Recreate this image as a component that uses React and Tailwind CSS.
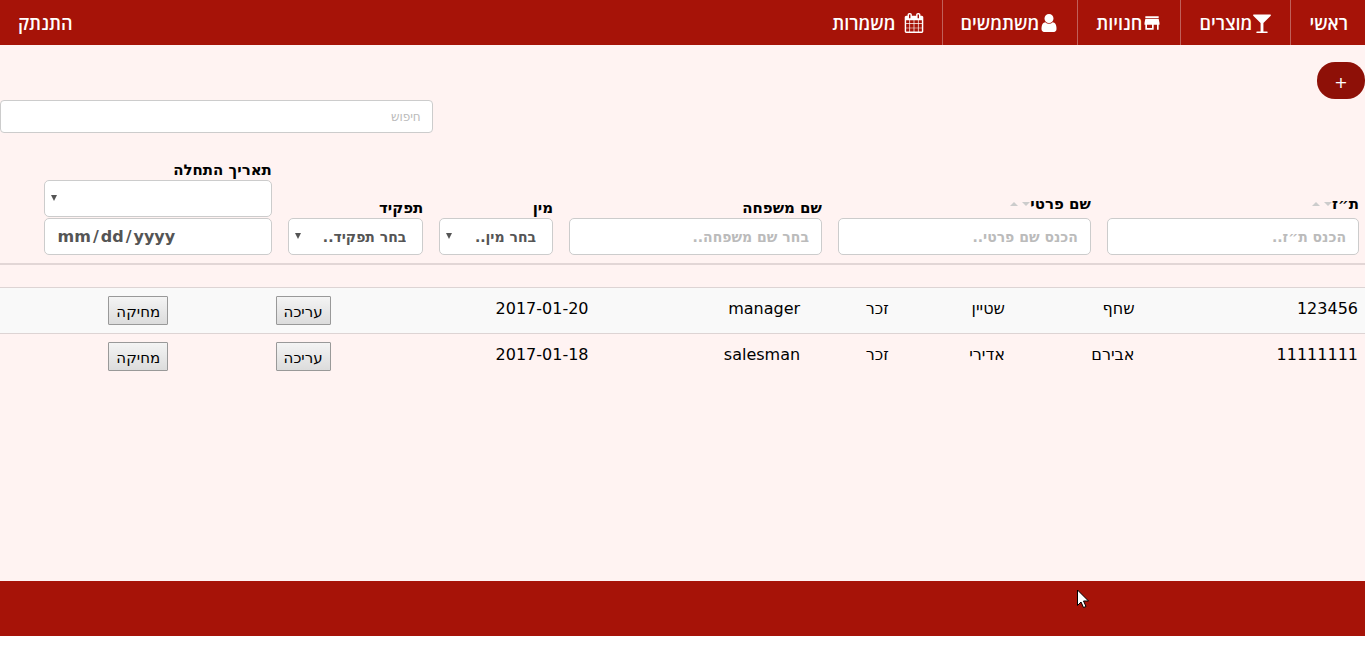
import { MdStore } from 'react-icons/md'

const users = [
  { id: '123456', first: 'שחף', last: 'שטיין', gender: 'זכר', role: 'manager', start: '2017-01-20' },
  { id: '11111111', first: 'אבירם', last: 'אדירי', gender: 'זכר', role: 'salesman', start: '2017-01-18' },
]

export default function App() {
  return (
    <div dir="rtl" className="flex min-h-screen flex-col bg-white font-['DejaVu_Sans',sans-serif] text-base text-black">
      <Navbar />

      <main className="flex flex-1 flex-col bg-[#fff3f2] pt-[17px]">
        <button type="button" aria-label="הוספת משתמש" className="h-[37px] w-12 self-start rounded-[18px] bg-[#8e1007] pt-1 text-white">
          +
        </button>
        <input
          type="search"
          aria-label="חיפוש"
          placeholder="חיפוש"
          className="mt-px h-[33px] w-[31.7%] self-end rounded border border-[#ccc] bg-white px-[11px] text-xs placeholder:text-[#bbb]"
        />
        <Filters />
        <UsersTable />
      </main>

      <footer className="relative mb-3 h-[55px] bg-[#a61308]">
        <Pointer />
      </footer>
    </div>
  )
}

/* ── Top navigation ── */

function Navbar() {
  const item = 'flex h-full items-center px-[18px]'
  return (
    <nav className="flex h-[45px] items-center bg-[#a61308] font-['Open_Sans','DejaVu_Sans',sans-serif] text-lg font-semibold text-white">
      <a href="#home" className="flex h-full items-center pr-[17px] pl-[18px]">ראשי</a>
      <a href="#products" className={`${item} border-r border-[#c0605a]`}>
        <GlassIcon />
        מוצרים
      </a>
      <a href="#stores" className={`${item} border-r border-[#c0605a]`}>
        <MdStore className="size-5" />
        חנויות
      </a>
      <a href="#users" className={`${item} border-r border-[#c0605a]`}>
        <UserIcon />
        משתמשים
      </a>
      <a href="#shifts" className={`${item} gap-2 border-r border-[#c0605a]`}>
        <CalendarIcon />
        משמרות
      </a>
      <a href="#logout" className={`${item} ms-auto`}>התנתק</a>
    </nav>
  )
}

/* ── Column filters ── */

const field = 'block h-[37px] w-full rounded-[5px] border border-[#ccc] bg-white text-sm font-bold text-[#555] placeholder:text-[#bbb]'

function Filters() {
  return (
    <table className="mt-[19px] w-full table-fixed border-b-2 border-[#e2d6d6]">
      <colgroup>
        <col className="w-[19.5%]" />
        <col className="w-[19.7%]" />
        <col className="w-[19.7%]" />
        <col className="w-[9.5%]" />
        <col className="w-[11.1%]" />
        <col className="w-[17.9%]" />
        <col />
      </colgroup>
      <thead>
        <tr className="text-right align-bottom text-[15px] leading-5">
          <th className="py-2 pr-1.5 pl-2">
            <SortLabel htmlFor="id">ת״ז</SortLabel>
            <input id="id" placeholder="הכנס ת״ז.." className={`${field} px-3`} />
          </th>
          <th className="p-2">
            <SortLabel htmlFor="first">שם פרטי</SortLabel>
            <input id="first" placeholder="הכנס שם פרטי.." className={`${field} px-3`} />
          </th>
          <th className="p-2">
            <label htmlFor="last" className="block">שם משפחה</label>
            <input id="last" placeholder="בחר שם משפחה.." className={`${field} px-3`} />
          </th>
          <th className="p-2">
            <label htmlFor="gender" className="block">מין</label>
            <Select id="gender" options={['בחר מין..', 'זכר', 'נקבה']} />
          </th>
          <th className="p-2">
            <label htmlFor="role" className="block">תפקיד</label>
            <Select id="role" options={['בחר תפקיד..', 'manager', 'salesman']} />
          </th>
          <th className="p-2">
            <label htmlFor="start" className="block">תאריך התחלה</label>
            <Select id="compare" label="השוואת תאריך" options={['', '=', '<', '>']} />
            <input
              id="start"
              type="date"
              dir="ltr"
              className={`${field} mt-px px-3 !text-base [&::-webkit-calendar-picker-indicator]:hidden [&::-webkit-datetime-edit-text]:px-px`}
            />
          </th>
          <td />
        </tr>
      </thead>
    </table>
  )
}

function SortLabel({ htmlFor, children }) {
  return (
    <div className="flex items-center pb-1">
      <label htmlFor={htmlFor}>{children}</label>
      <svg className="h-1 w-5" viewBox="0 0 20 4" fill="#ccc">
        <path d="M12 0h8l-4 4zM0 4h8l-4-4z" />
      </svg>
    </div>
  )
}

function Select({ id, label, options }) {
  return (
    <div className="relative">
      <select id={id} aria-label={label} className={`${field} appearance-none pr-4 pl-5`}>
        {options.map((o) => (
          <option key={o}>{o}</option>
        ))}
      </select>
      <svg className="pointer-events-none absolute top-[15px] left-[7px] size-1.5" viewBox="0 0 6 6" fill="#555">
        <path d="M0 0h6l-3 6z" />
      </svg>
    </div>
  )
}

/* ── Users ── */

function UsersTable() {
  return (
    <table className="mt-[22px] w-full table-fixed">
      <colgroup>
        <col className="w-[16.3%]" />
        <col className="w-[9.5%]" />
        <col className="w-[8.5%]" />
        <col className="w-[6.5%]" />
        <col className="w-[15.5%]" />
        <col className="w-[18.9%]" />
        <col className="w-[11.9%]" />
        <col />
      </colgroup>
      <tbody className="leading-[26px]">
        {users.map((u) => (
          <tr key={u.id} className="border-t border-[#ddd4d4] align-top odd:bg-[#f9f9f9]">
            <td className="px-[7px] py-2">{u.id}</td>
            <td className="p-2">{u.first}</td>
            <td className="p-2">{u.last}</td>
            <td className="p-2">{u.gender}</td>
            <td className="p-2">{u.role}</td>
            <td className="p-2">{u.start}</td>
            <td className="p-2"><RowButton>עריכה</RowButton></td>
            <td className="p-2"><RowButton>מחיקה</RowButton></td>
          </tr>
        ))}
      </tbody>
    </table>
  )
}

function RowButton({ children }) {
  return (
    <button type="button" className="block h-[29px] rounded-[1px] border border-[#999] bg-linear-to-b from-[#f4f4f4] to-[#dcdcdc] px-[7px] pt-0.5 text-[15px]">
      {children}
    </button>
  )
}

/* ── Icons ── */

function GlassIcon() {
  return (
    <svg className="size-5" viewBox="0 0 1792 1792" fill="currentColor">
      <path d="M1699 186q0 35-43 78l-632 632v768h320q26 0 45 19t19 45-19 45-45 19h-896q-26 0-45-19t-19-45 19-45 45-19h320v-768l-632-632q-43-43-43-78 0-23 18-36.5t38-17.5 43-4h1408q23 0 43 4t38 17.5 18 36.5z" />
    </svg>
  )
}

function UserIcon() {
  return (
    <svg className="h-[18px] w-5" viewBox="0 128 1280 1536" fill="currentColor">
      <path d="M1280 1399q0 109-62.5 187t-150.5 78h-854q-88 0-150.5-78t-62.5-187q0-85 8.500-160.500t31.500-152 58.500-131 94-89 134.500-34.500q131 128 313 128t313-128q76 0 134.500 34.500t94 89 58.500 131 31.500 152 8.500 160.500zm-256-887q0 159-112.500 271.500t-271.500 112.500-271.500-112.500-112.500-271.500 112.500-271.500 271.500-112.500 271.500 112.500 112.500 271.500z" />
    </svg>
  )
}

function CalendarIcon() {
  return (
    <svg className="size-5" viewBox="0 0 1792 1792" fill="currentColor">
      <path d="M192 1664h288v-288h-288v288zm352 0h320v-288h-320v288zm-352-352h288v-320h-288v320zm352 0h320v-320h-320v320zm-352-384h288v-288h-288v288zm736 736h320v-288h-320v288zm-384-736h320v-288h-320v288zm768 736h288v-288h-288v288zm-384-352h320v-320h-320v320zm-352-864v-288q0-13-9.5-22.5t-22.5-9.5h-64q-13 0-22.5 9.5t-9.5 22.5v288q0 13 9.5 22.5t22.5 9.5h64q13 0 22.5-9.5t9.5-22.5zm736 864h288v-320h-288v320zm-384-384h320v-288h-320v288zm384 0h288v-288h-288v288zm32-480v-288q0-13-9.5-22.5t-22.5-9.5h-64q-13 0-22.5 9.5t-9.5 22.5v288q0 13 9.5 22.5t22.5 9.5h64q13 0 22.5-9.5t9.5-22.5zm384-64v1280q0 52-38 90t-90 38h-1408q-52 0-90-38t-38-90v-1280q0-52 38-90t90-38h128v-96q0-66 47-113t113-47h64q66 0 113 47t47 113v96h384v-96q0-66 47-113t113-47h64q66 0 113 47t47 113v96h128q52 0 90 38t38 90z" />
    </svg>
  )
}

function Pointer() {
  return (
    <svg className="absolute top-2 left-[78.9%] h-5 w-3" viewBox="0 0 12 20" fill="#fff" stroke="#000">
      <path d="M.5 1v15.500l3.500-3.500 2.500 5.500 2.500-1-2.500-5.500h5z" />
    </svg>
  )
}
